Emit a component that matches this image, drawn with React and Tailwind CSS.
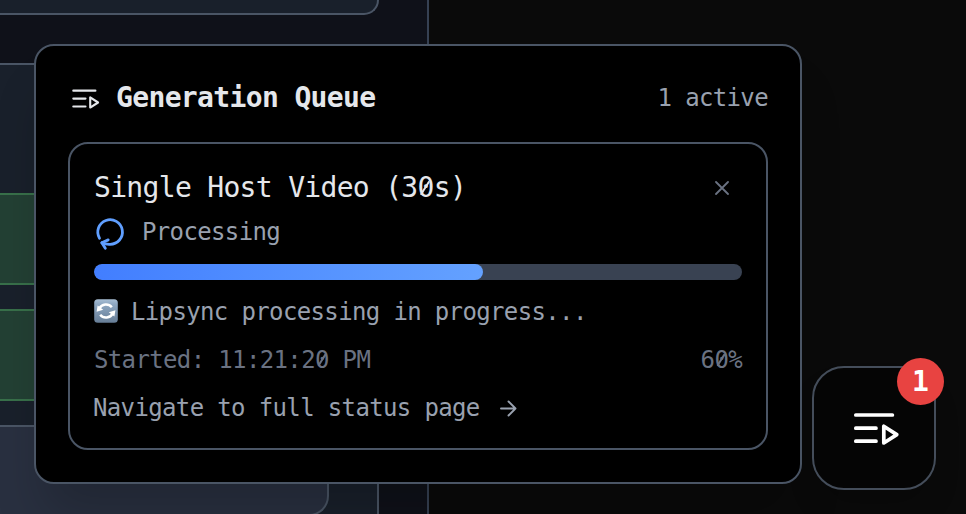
import React from "react";

function QueueIcon({ className, strokeWidth }) {
  return (
    <svg viewBox="0 0 48 34" className={className} fill="none" stroke="currentColor" strokeWidth={strokeWidth} strokeLinecap="round" strokeLinejoin="round">
      <path d="M3.8 4H40.4M3.8 17.2H24M3.8 30.2H24" />
      <path d="M31.8 15.2V32L44.8 23.6Z" />
    </svg>
  );
}

function SpinnerIcon() {
  return (
    <svg viewBox="0 0 32 32" className="size-8 shrink-0 overflow-visible text-[#609fff]" fill="none" stroke="currentColor" strokeWidth="2.8" strokeLinecap="round" strokeLinejoin="round">
      <path d="M5.5 22.2A12.3 12.3 0 1 1 16 28.3Q11.5 28.5 7.9 26.8" />
      <path d="M14.2 23.9L7.8 26.7L11.3 32.2" />
    </svg>
  );
}

function RefreshEmoji() {
  return (
    <svg viewBox="0 0 24 24" className="-mt-[2px] size-6 shrink-0">
      <defs>
        <linearGradient id="tile" x1="0" y1="0" x2="0" y2="1">
          <stop offset="0" stopColor="#a9bfd5" />
          <stop offset="0.2" stopColor="#8fa8c2" />
          <stop offset="1" stopColor="#667d96" />
        </linearGradient>
      </defs>
      <rect x="0.2" y="0.2" width="23.6" height="23.6" rx="3.6" fill="url(#tile)" />
      <path d="M5.4 9.4A7.2 6.6 0 0 1 17.8 8.2M18.6 14.6A7.2 6.6 0 0 1 6.2 15.8" fill="none" stroke="white" strokeWidth="2.5" />
      <path d="M2.6 12.8L3.6 6.6L9.2 10.8ZM21.4 11.2L20.4 17.4L14.8 13.2Z" fill="white" />
    </svg>
  );
}

function SlashedZero() {
  return (
    <span className="relative inline-block">
      0
      <span className="absolute top-1/2 left-[48%] h-[2px] w-[0.58em] -translate-x-1/2 -translate-y-1/2 -rotate-[58deg] rounded-full bg-current" />
    </span>
  );
}

function Backdrop() {
  return (
    <div className="flex h-full w-[429px] flex-col border-r-2 border-[#364153] bg-[#0f1119]">
      <div className="h-[15px] w-[379px] shrink-0 rounded-br-[20px] border-r-2 border-b-2 border-[#4a5565] bg-[#19202b]" />
      <div className="mt-12 flex w-[379px] flex-1 flex-col overflow-hidden border-t-2 border-r-2 border-[#4a5565] bg-[#19202b] pt-32">
        <div className="h-[92px] w-[329px] shrink-0 border-y-2 border-[#38704a] bg-[#234034]" />
        <div className="mt-6 h-[92px] w-[329px] shrink-0 border-y-2 border-[#38704a] bg-[#234034]" />
        <div className="mt-6 h-[91px] w-[329px] shrink-0 rounded-br-[20px] border-2 border-l-0 border-[#4a5565] bg-[#293040]" />
      </div>
    </div>
  );
}

function JobCard() {
  return (
    <div className="mt-6 rounded-[20px] border-2 border-[#4a5565] bg-black p-6 text-2xl tracking-[-0.64px] text-[#99a1af]">
      <div className="flex h-10 items-center justify-between text-[28px] tracking-[-0.68px] text-[#e5e7eb]">
        <span>Single Host Video (3<SlashedZero />s)</span>
        <svg viewBox="0 0 14 14" className="mr-[13px] size-3.5 text-[#6a7282]" stroke="currentColor" strokeWidth="1.8" strokeLinecap="round">
          <path d="M1 1L13 13M13 1L1 13" />
        </svg>
      </div>
      <div className="mt-2 flex h-8 items-center gap-4">
        <SpinnerIcon />
        <span>Processing</span>
      </div>
      <div className="mt-4 h-4 overflow-hidden rounded-full bg-[#394252]">
        <div className="h-full w-[60%] rounded-full bg-linear-to-r from-[#427eff] to-[#64a1ff]" />
      </div>
      <div className="mt-4 flex h-8 items-center gap-[13px]">
        <RefreshEmoji />
        <span>Lipsync processing in progress...</span>
      </div>
      <div className="mt-4 flex h-8 items-center justify-between text-[#6a7282]">
        <span>Started: 11:21:2<SlashedZero /> PM</span>
        <span>6<SlashedZero />%</span>
      </div>
      <div className="mt-4 flex h-8 items-center gap-5">
        <span className="-ml-px">Navigate to full status page</span>
        <svg viewBox="0 0 17 17" className="size-[17px]" fill="none" stroke="currentColor" strokeWidth="1.9" strokeLinecap="round" strokeLinejoin="round">
          <path d="M1 8.5H15.5M8.5 1.5L15.5 8.5L8.5 15.5" />
        </svg>
      </div>
    </div>
  );
}

export default function App() {
  return (
    <div className="relative h-[514px] w-[966px] overflow-hidden bg-[#0a0a0a] font-['DejaVu_Sans_Mono',monospace] whitespace-nowrap">
      <Backdrop />
      <section className="absolute top-[44px] left-[34px] h-[440px] w-[768px] rounded-[20px] border-2 border-[#4a5565] bg-black p-8 shadow-[0_40px_50px_-10px_rgba(0,0,0,0.2)]">
        <header className="flex h-10 items-center justify-between text-[#e5e7eb]">
          <div className="flex items-center">
            <QueueIcon className="ml-[3px] h-[21px] w-[29px]" strokeWidth={3.5} />
            <h2 className="ml-4 text-[28px] font-bold tracking-[-0.64px]">Generation Queue</h2>
          </div>
          <span className="text-2xl tracking-[-0.64px] text-[#99a1af]">1 active</span>
        </header>
        <JobCard />
      </section>
      <button className="absolute top-[366px] left-[812px] flex size-[124px] items-center justify-center rounded-[32px] border-2 border-[#444d5a] bg-[#050505] text-white shadow-[0_20px_30px_-6px_rgba(0,0,0,0.2)]">
        <QueueIcon className="ml-1 h-[34px] w-12" strokeWidth={3.7} />
        <span className="absolute -top-[10px] -right-[10px] flex size-[47px] items-center justify-center rounded-full bg-[#e84341] text-[28px] font-bold">1</span>
      </button>
    </div>
  );
}
